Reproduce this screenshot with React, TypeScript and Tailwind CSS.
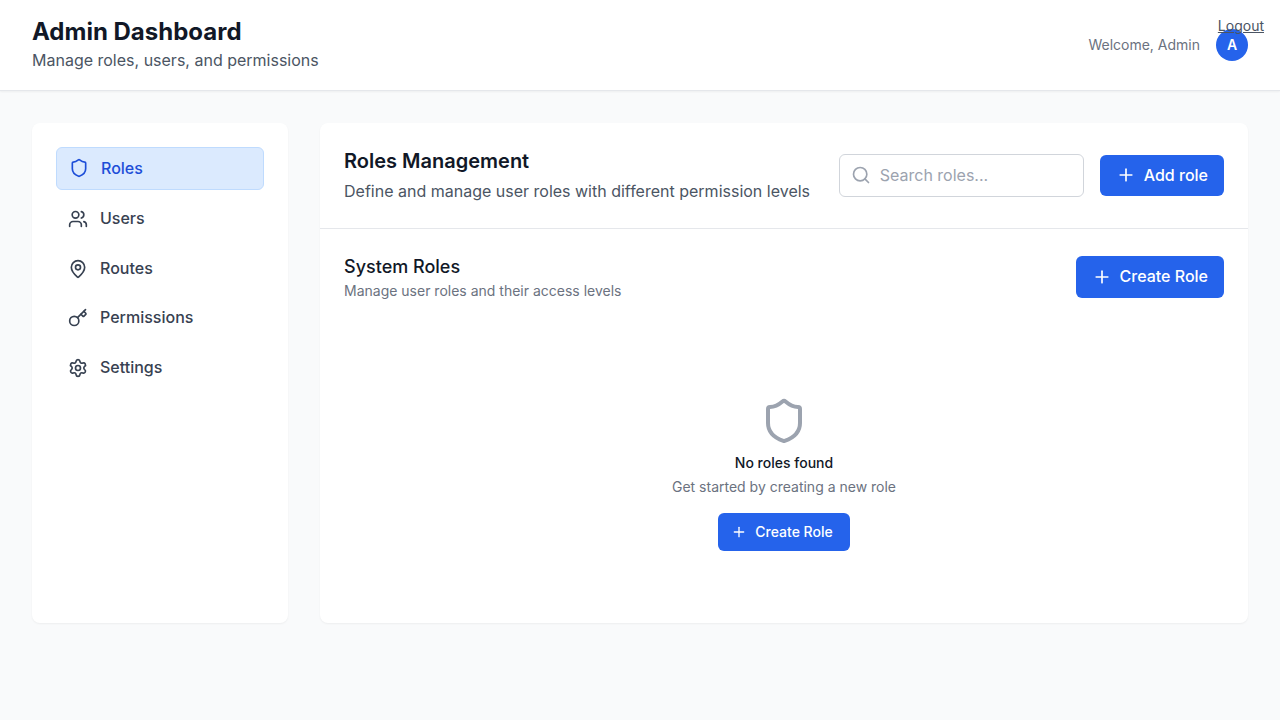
import React from "react";
import { Shield, Users, MapPin, Key, Settings, Search, Plus } from "lucide-react";

const items = [
  { label: "Users", Icon: Users },
  { label: "Routes", Icon: MapPin },
  { label: "Permissions", Icon: Key },
  { label: "Settings", Icon: Settings },
];

export default function App() {
  return (
    <div className="relative min-h-screen bg-[#f9fafb] font-['Inter',sans-serif] text-base leading-[1.6] text-[#111827] antialiased">
      <a href="#" className="absolute right-4 top-4 z-10 text-sm text-[#4b5563] underline">Logout</a>
      <header className="flex items-center justify-between border-b border-[#e5e7eb] bg-white px-8 py-4 shadow-[0_1px_2px_rgba(0,0,0,0.05)]">
        <div>
          <h1 className="text-2xl font-bold leading-8">Admin Dashboard</h1>
          <p className="text-[#4b5563]">Manage roles, users, and permissions</p>
        </div>
        <div className="flex items-center gap-4">
          <span className="text-sm text-[#6b7280]">Welcome, Admin</span>
          <div className="flex size-8 items-center justify-center rounded-full bg-[#2563eb] text-sm font-semibold text-white">A</div>
        </div>
      </header>
      <div className="flex gap-8 p-8">
        <aside className="h-[500px] w-64 shrink-0 rounded-lg bg-white p-6 shadow-[0_1px_2px_rgba(0,0,0,0.05)]">
          <nav className="flex flex-col gap-2">
            <a className="flex items-center gap-3 rounded-md border border-[#bfdbfe] bg-[#dbeafe] px-3 py-2 font-medium text-[#1d4ed8]">
              <Shield size={20} />
              <span>Roles</span>
            </a>
            {items.map(({ label, Icon }) => (
              <a key={label} className="flex items-center gap-3 rounded-md px-3 py-2 font-medium text-[#374151]">
                <Icon size={20} />
                <span>{label}</span>
              </a>
            ))}
          </nav>
        </aside>
        <main className="h-[500px] flex-1 rounded-lg bg-white shadow-[0_1px_2px_rgba(0,0,0,0.05)]">
          <div className="flex items-center justify-between border-b border-[#e5e7eb] p-6">
            <div>
              <h2 className="text-xl font-semibold leading-7">Roles Management</h2>
              <p className="mt-1 text-[#4b5563]">Define and manage user roles with different permission levels</p>
            </div>
            <div className="flex items-center gap-4">
              <div className="flex w-[245px] items-center gap-[9px] rounded-md border border-[#d1d5db] px-[11px] py-2 text-[#9ca3af]">
                <Search size={20} />
                <span>Search roles...</span>
              </div>
              <button className="flex items-center gap-2 rounded-md bg-[#2563eb] px-4 py-2 font-medium text-white">
                <Plus size={20} />
                <span>Add role</span>
              </button>
            </div>
          </div>
          <div className="flex items-center justify-between px-6 pt-6">
            <div>
              <h3 className="text-lg font-medium leading-7">System Roles</h3>
              <p className="text-sm text-[#6b7280]">Manage user roles and their access levels</p>
            </div>
            <button className="flex items-center gap-2 rounded-md bg-[#2563eb] px-4 py-2 font-medium text-white">
              <Plus size={20} />
              <span>Create Role</span>
            </button>
          </div>
          <div className="mt-24 flex flex-col items-center text-sm leading-5">
            <Shield size={48} className="text-[#9ca3af]" />
            <h3 className="mt-2 font-medium">No roles found</h3>
            <p className="mt-1 text-[#6b7280]">Get started by creating a new role</p>
            <button className="mt-4 flex items-center rounded-md border border-transparent bg-[#2563eb] px-4 py-2 font-medium text-white">
              <Plus size={16} className="-ml-1 mr-2" />
              <span>Create Role</span>
            </button>
          </div>
        </main>
      </div>
    </div>
  );
}
